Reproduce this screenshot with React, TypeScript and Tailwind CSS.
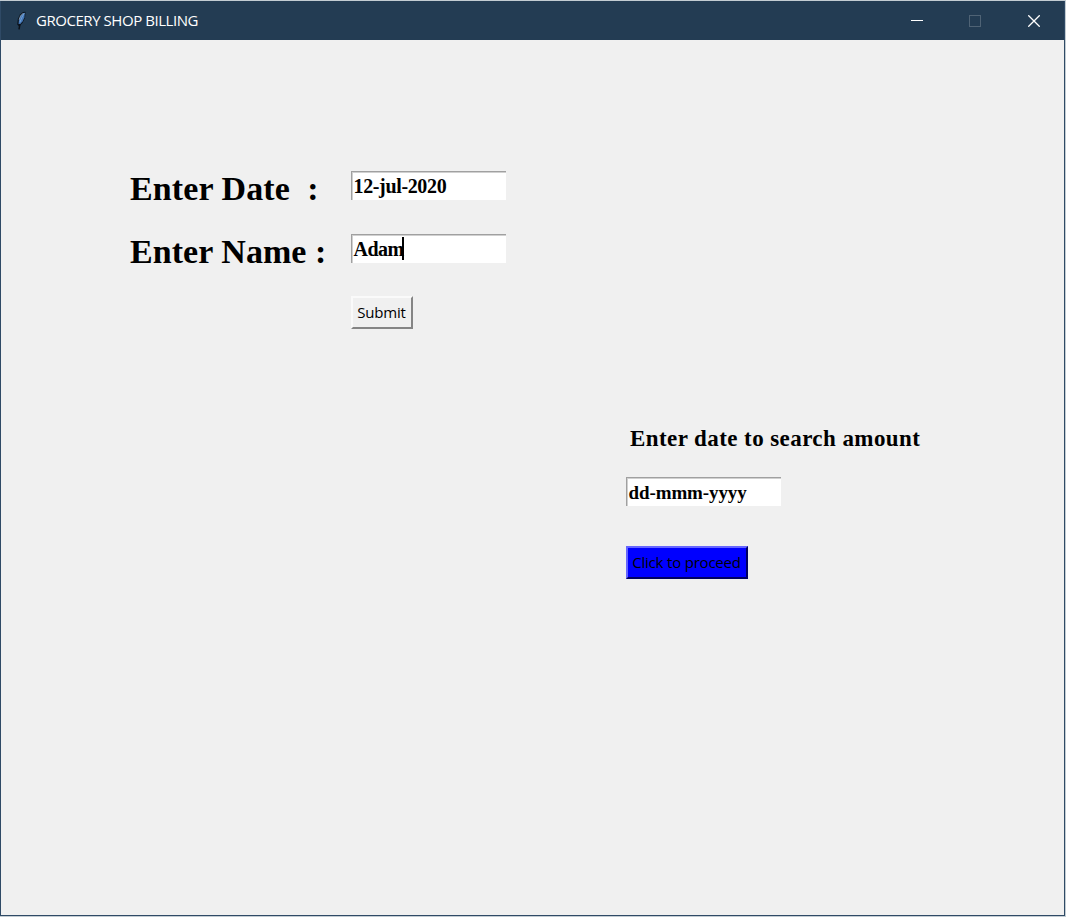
import type { ReactNode } from 'react';

function Feather() {
  return (
    <svg width="12" height="20" viewBox="0 0 12 20" className="block shrink-0">
      <path d="M10.5 .8 L8 1 L5 3.5 L2.8 8 L2.2 13.5 L4 15.5 L7.5 12 L10 7 Z" fill="#0c151f" />
      <path d="M9.8 1.8 L8 2.2 L5.5 4.8 L4 8.5 L3.6 13 L5 13.2 L7.5 10.5 L9.4 6.5 Z" fill="#4478b8" />
      <path d="M9.3 2.2 L6.8 6.5 L5 11" stroke="#6f9fd6" strokeWidth="1" fill="none" />
      <path d="M8.2 2.2 L5.5 5 L4.2 8.5" stroke="#a5afb8" strokeWidth=".7" fill="none" />
      <path d="M5 13 L4 18.3" stroke="#0b1017" strokeWidth="1.5" fill="none" />
    </svg>
  );
}

function TitleBar() {
  return (
    <header className="flex h-[39px] shrink-0 items-center bg-[#233c53] pl-[14px] text-white">
      <Feather />
      <h1 className="ml-[9px] whitespace-nowrap pb-[2px] font-['Open_Sans',sans-serif] text-[15px] leading-5 tracking-[-0.45px]">
        GROCERY SHOP BILLING
      </h1>
      <div className="ml-auto flex items-center">
        <button aria-label="Minimize" className="flex h-[39px] w-[58px] items-center justify-center">
          <svg width="12" height="12" shapeRendering="crispEdges"><path d="M0 5h12v1H0z" fill="#fff" /></svg>
        </button>
        <button aria-label="Maximize" disabled className="flex h-[39px] w-[58px] items-center justify-center">
          <svg width="12" height="12"><rect x=".5" y=".5" width="11" height="11" fill="none" stroke="#4f6375" /></svg>
        </button>
        <button aria-label="Close" className="flex h-[39px] w-[60px] items-center justify-center">
          <svg width="12" height="12"><path d="M.3.3l11.4 11.4M11.7.3L.3 11.7" stroke="#fff" strokeWidth="1.3" /></svg>
        </button>
      </div>
    </header>
  );
}

function Entry({ children, caret = false, textStyle }: { children: ReactNode; caret?: boolean; textStyle: string }) {
  return (
    <div className="flex h-[29px] w-[155px] items-center border-l border-t border-[#a0a0a0] bg-white pl-[1.5px] shadow-[inset_1px_1px_0_#d0d0d0]">
      <span className={`whitespace-pre leading-[22px] ${textStyle}`}>{children}</span>
      {caret && <span className="-ml-[2px] mb-px h-[23px] w-[2px] bg-black" />}
    </div>
  );
}

export default function App() {
  return (
    <div className="flex h-[917px] w-[1066px] flex-col border-b border-r border-t border-[#c3ccd2] bg-[#f0f0f0]">
      <div className="flex min-h-0 flex-1 flex-col border-b border-l border-r border-[#2f4a66]">
        <TitleBar />
        <main className="flex flex-1 flex-col font-['Liberation_Serif',serif] font-bold text-black">
          <section className="grid grid-cols-[221px_155px] pl-[129px] pt-[131px]">
            <div className="h-[63px] whitespace-pre text-[34px] leading-[35px] tracking-[0.1px]">Enter Date  :</div>
            <Entry textStyle="text-[20px] tracking-[-0.35px]">12-jul-2020</Entry>
            <div className="h-[62px] whitespace-pre text-[34px] leading-[35px] tracking-[0.05px]">Enter Name :</div>
            <Entry textStyle="pb-px text-[20px] tracking-[-0.5px]" caret>Adam</Entry>
            <button className="col-start-2 flex h-[33px] w-[62px] items-center justify-center border-2 border-b-[#858585] border-l-[#fafafa] border-r-[#858585] border-t-[#fafafa] bg-[#f0f0f0] pb-[2px] pr-px font-['Open_Sans',sans-serif] text-[15px] font-normal leading-5">
              <span className="whitespace-nowrap tracking-[-0.2px]">Submit</span>
            </button>
          </section>
          <section className="flex flex-col items-start pl-[625px] pt-[96px]">
            <h2 className="ml-1 whitespace-nowrap text-[23px] leading-[28px] tracking-[0.42px]">Enter date to search amount</h2>
            <div className="mt-[24px]">
              <Entry textStyle="pt-[2px] text-[19px] tracking-[-0.1px]">dd-mmm-yyyy</Entry>
            </div>
            <button className="mt-[40px] flex h-[33px] w-[122px] items-center justify-center border-2 border-b-[#000060] border-l-[#6565ff] border-r-[#000060] border-t-[#6565ff] bg-[#0000ff] pb-[2px] pr-px font-['Open_Sans',sans-serif] text-[15px] font-normal leading-5">
              <span className="whitespace-nowrap tracking-[-0.2px]">Click to proceed</span>
            </button>
          </section>
        </main>
      </div>
    </div>
  );
}
